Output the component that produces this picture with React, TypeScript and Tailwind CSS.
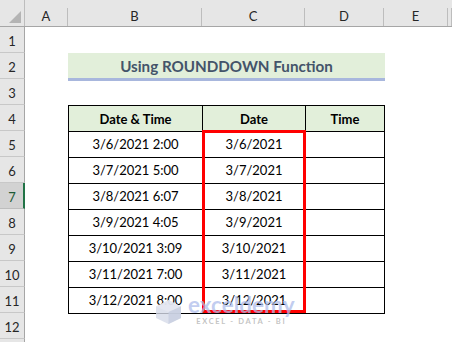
import React from "react";

const colHeads = [
  { label: "A", cls: "w-[43px]" },
  { label: "B", cls: "w-[134px]" },
  { label: "C", cls: "w-[103px]" },
  { label: "D", cls: "w-[79px]" },
  { label: "E", cls: "w-[64px]" },
  { label: "", cls: "w-[4px]" },
];

const rowNums = ["1", "2", "3", "4", "5", "6", "7", "8", "9", "10", "11", "12", ""];

const data = [
  ["3/6/2021 2:00", "3/6/2021"],
  ["3/7/2021 5:00", "3/7/2021"],
  ["3/8/2021 6:07", "3/8/2021"],
  ["3/9/2021 4:05", "3/9/2021"],
  ["3/10/2021 3:09", "3/10/2021"],
  ["3/11/2021 7:00", "3/11/2021"],
  ["3/12/2021 8:00", "3/12/2021"],
];

const headCell =
  "flex h-[26px] items-center justify-center border-r border-b border-black bg-[#E2EFDA] pt-[2px] text-[13px] font-bold text-black";
const bodyCell =
  "flex h-[26px] items-center justify-center border-r border-b border-black pt-[1px] text-[13px] text-black";

function Watermark() {
  return (
    <div className="pointer-events-none absolute left-[155px] top-[294px] flex items-start gap-[6px]">
      <svg className="mt-[5px]" width="27" height="26" viewBox="0 0 27 26" aria-hidden>
        <polygon points="13.5,1 26,7.5 26,19 13.5,25 1,19 1,7.5" fill="#D6DBE8" fillOpacity="0.8" />
        <polygon points="13.5,1 26,7.5 13.5,13 1,7.5" fill="#E6E9F1" fillOpacity="0.8" />
        <polygon points="13.5,13 26,7.5 26,19 13.5,25" fill="#C7CEE0" fillOpacity="0.8" />
      </svg>
      <div className="flex flex-col items-center">
        <span className="text-[22.5px] font-bold leading-[21px] text-[#AEBDEB]/75">exceldemy</span>
        <span className="mt-[3px] text-[7.5px] font-bold leading-[8px] tracking-[1.7px] text-[#BDBDBD]/90">
          EXCEL - DATA - BI
        </span>
      </div>
    </div>
  );
}

export default function App() {
  return (
    <div className="relative h-[342px] w-[452px] overflow-hidden bg-white font-['Lato',_'Liberation_Sans',_sans-serif] text-[#262626]">
      {/* column headers */}
      <div className="flex h-[27px] border-b border-[#A6A6A6] bg-[#E6E6E6]">
        <div className="flex w-[25px] items-end justify-end border-r border-[#BDBDBD] pb-[3px] pr-[3px]">
          <svg width="12" height="12" viewBox="0 0 12 12" aria-hidden>
            <polygon points="12,0 12,12 0,12" fill="#B4B4B4" />
          </svg>
        </div>
        {colHeads.map((c) => (
          <div key={c.label || "x"} className={`flex shrink-0 ${c.cls}`}>
            <div className="flex flex-1 items-center justify-center pt-[7px] text-[13px]">{c.label}</div>
            <div className="h-[18px] w-px self-end bg-[#BDBDBD]" />
          </div>
        ))}
      </div>

      <div className="flex">
        {/* row headers */}
        <div className="flex w-[25px] shrink-0 flex-col bg-[#E6E6E6]">
          {rowNums.map((n, i) =>
            n === "7" ? (
              <div
                key={i}
                className="flex h-[26px] items-center justify-center border-b border-r-2 border-b-[#BDBDBD] border-r-[#217346] bg-[#D2D2D2] pl-[1px] pt-[4px] text-[13px] text-[#1E5A36]"
              >
                {n}
              </div>
            ) : (
              <div
                key={i}
                className="flex h-[26px] items-center justify-center border-b border-r border-b-[#C8C8C8] border-r-[#A6A6A6] pt-[4px] text-[13px]"
              >
                {n}
              </div>
            ),
          )}
        </div>

        {/* sheet */}
        <div className="flex flex-1 flex-col pl-[43px]">
          <div className="h-[26px]" />
          <div className="flex h-[28px] w-[317px] items-center justify-center border-b-[3px] border-[#A8B7DD] bg-[#E2EFDA] pt-[1px] text-[15.2px] font-bold text-[#44546A]">
            Using ROUNDDOWN Function
          </div>
          <div className="h-[24px]" />

          <div className="relative w-[317px]">
            <div className="grid grid-cols-[134px_103px_79px] border-l border-t border-black">
              <div className={headCell}>Date &amp; Time</div>
              <div className={headCell}>Date</div>
              <div className={headCell}>Time</div>
              {data.map(([dt, d]) => (
                <React.Fragment key={dt}>
                  <div className={bodyCell}>{dt}</div>
                  <div className={bodyCell}>{d}</div>
                  <div className={bodyCell} />
                </React.Fragment>
              ))}
            </div>
            <div className="pointer-events-none absolute left-[134px] top-[25px] h-[183px] w-[104px] border-[3px] border-[#FF0000]" />
          </div>
        </div>
      </div>

      <Watermark />
    </div>
  );
}
